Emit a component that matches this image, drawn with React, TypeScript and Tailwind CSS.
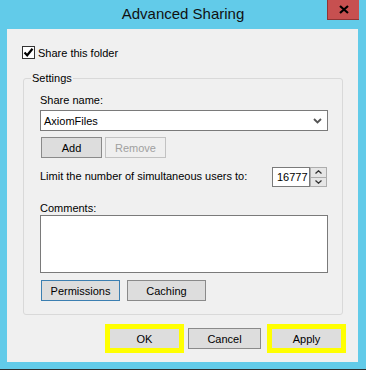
import React from 'react';

function WinButton({ label, w, disabled, focused }: { label: string; w: string; disabled?: boolean; focused?: boolean }) {
  const border = disabled ? 'border-[#c2c2c2]' : focused ? 'border-[#3c7fb1]' : 'border-[#8a8a8a]';
  const bg = disabled ? 'bg-[#efefef]' : 'bg-[#dddddd]';
  const text = disabled ? 'text-[#a0a0a0]' : 'text-black';
  return (
    <div className={`${w} h-[21px] border ${border} ${bg} ${text} flex items-center justify-center`}>
      {label}
    </div>
  );
}

function YellowButton({ label, w }: { label: string; w: string }) {
  return (
    <div className={`${w} h-[29px] border-[5px] border-[#ffff00] bg-[#dddddd] flex items-center justify-center`}>
      {label}
    </div>
  );
}

export default function App() {
  return (
    <div className="w-[366px] h-[370px] bg-[#62cbe9] flex flex-col overflow-hidden font-['Liberation_Sans',Arial,sans-serif] text-[11px] leading-[14px] text-black">
      {/* Title bar */}
      <div className="relative h-[29px] shrink-0 flex items-center justify-center">
        <span className="text-[15px] leading-[18px] text-[#111] mt-[-1px]">Advanced Sharing</span>
        <div className="absolute right-[7px] top-0 w-[32px] h-[20px] bg-[#c75050] border-l border-b border-[#8f3434] flex items-center justify-center">
          <svg width="10" height="9" viewBox="0 0 10 9">
            <path d="M1 1 L9 8 M9 1 L1 8" stroke="#000" strokeWidth="2.2" />
          </svg>
        </div>
      </div>

      {/* Client area */}
      <div className="ml-[7px] w-[351px] h-[333px] shrink-0 bg-[#f0f0f0] flex flex-col">
        {/* Share checkbox */}
        <div className="mt-[17px] ml-[15px] flex items-center h-[13px] gap-[3px]">
          <div className="w-[13px] h-[13px] border border-[#333] bg-white flex items-center justify-center">
            <svg width="11" height="11" viewBox="0 0 11 11">
              <path d="M1.5 5.5 L4.2 8.3 L9.5 1.8" fill="none" stroke="#000" strokeWidth="2.2" />
            </svg>
          </div>
          <span>Share this folder</span>
        </div>

        {/* Settings group */}
        <div className="relative mt-[19px] ml-[16px] w-[320px] h-[237px] border border-[#d9d9d9] rounded-[3px] pt-[14px] pl-[16px] flex flex-col">
          <span className="absolute top-[-8px] left-[7px] px-[1px] bg-[#f0f0f0]">Settings</span>

          <div>Share name:</div>
          <div className="mt-[3px] w-[288px] h-[21px] border border-[#7a7a7a] bg-white flex items-center justify-between pl-[3px] pr-[5px]">
            <span>AxiomFiles</span>
            <svg width="9" height="6" viewBox="0 0 9 6">
              <path d="M1 1 L4.5 4.5 L8 1" fill="none" stroke="#555" strokeWidth="1.8" />
            </svg>
          </div>

          <div className="mt-[6px] ml-[1px] flex gap-[3px]">
            <WinButton label="Add" w="w-[61px]" />
            <WinButton label="Remove" w="w-[61px]" disabled />
          </div>

          <div className="mt-[9px] h-[20px] flex items-center">
            <span className="w-[232px] mt-[-3px]">Limit the number of simultaneous users to:</span>
            <div className="w-[38px] h-[20px] border border-[#7a7a7a] bg-white pl-[4px] overflow-hidden whitespace-nowrap flex items-center">
              16777
            </div>
            <div className="w-[17px] h-[20px] flex flex-col border border-[#adadad] bg-[#e6e6e6]">
              <div className="flex-1 flex items-center justify-center border-b border-[#adadad]">
                <svg width="7" height="4" viewBox="0 0 7 4">
                  <path d="M0.5 3.5 L3.5 0.8 L6.5 3.5" fill="none" stroke="#333" strokeWidth="1.3" />
                </svg>
              </div>
              <div className="flex-1 flex items-center justify-center">
                <svg width="7" height="4" viewBox="0 0 7 4">
                  <path d="M0.5 0.5 L3.5 3.2 L6.5 0.5" fill="none" stroke="#333" strokeWidth="1.3" />
                </svg>
              </div>
            </div>
          </div>

          <div className="mt-[14px]">Comments:</div>
          <div className="w-[288px] h-[58px] border border-[#7a7a7a] bg-white" />

          <div className="mt-[7px] ml-[1px] flex gap-[7px]">
            <WinButton label="Permissions" w="w-[79px]" focused />
            <WinButton label="Caching" w="w-[79px]" />
          </div>
        </div>

        {/* Dialog buttons */}
        <div className="mt-[9px] pr-[12px] flex justify-end items-center">
          <YellowButton label="OK" w="w-[79px]" />
          <div className="ml-[4px]">
            <WinButton label="Cancel" w="w-[73px]" />
          </div>
          <div className="ml-[6px]">
            <YellowButton label="Apply" w="w-[79px]" />
          </div>
        </div>
      </div>

      <div className="h-[7px] shrink-0" />
      <div className="h-[1px] shrink-0 bg-[#2d2d2d]" />
    </div>
  );
}
